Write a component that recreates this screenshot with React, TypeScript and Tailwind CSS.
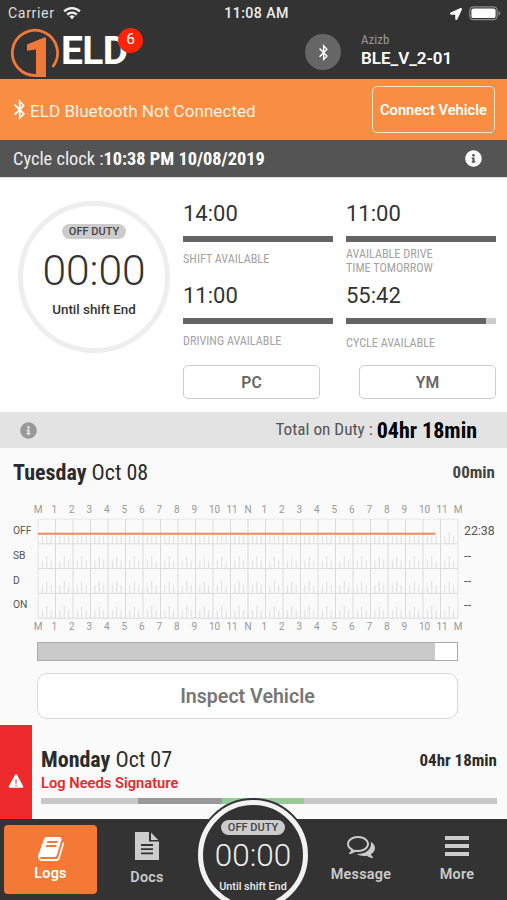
import type { ReactNode } from 'react'
import { FaBluetoothB, FaInfoCircle, FaLocationArrow } from 'react-icons/fa'
import { IoIosWarning } from 'react-icons/io'

const HOURS = ['M', '1', '2', '3', '4', '5', '6', '7', '8', '9', '10', '11', 'N', '1', '2', '3', '4', '5', '6', '7', '8', '9', '10', '11', 'M']

const ROWS = [
  { label: 'OFF', total: '22:38' },
  { label: 'SB', total: '--' },
  { label: 'D', total: '--' },
  { label: 'ON', total: '--' },
]

const COL = 17.5
const ROW = 24.8

function Condensed({ className = '', children }: { className?: string; children: ReactNode }) {
  return (
    <span className={`font-['Roboto_Condensed',Roboto,sans-serif] font-stretch-condensed whitespace-nowrap ${className}`}>
      {children}
    </span>
  )
}

function WifiIcon() {
  return (
    <svg width="18" height="14" viewBox="0 0 18 14" fill="none" stroke="#f2f2f2" strokeWidth="2.4">
      <path d="M1.2 5.4a11 11 0 0 1 15.6 0" />
      <path d="M4.2 8.6a6.8 6.8 0 0 1 9.6 0" />
      <path d="M9 13.2 6.4 10.6a3.7 3.7 0 0 1 5.2 0z" fill="#f2f2f2" stroke="none" />
    </svg>
  )
}

function Battery() {
  return (
    <svg width="32" height="15" viewBox="0 0 32 15">
      <rect x="0.8" y="0.8" width="27.4" height="12.9" rx="3.6" fill="none" stroke="#8c8c8c" strokeWidth="1.2" />
      <rect x="2.4" y="2.4" width="24.2" height="9.7" rx="2.2" fill="#fff" />
      <path d="M29.6 5v4.6q1.6-.6 1.6-2.3T29.6 5" fill="#8c8c8c" />
    </svg>
  )
}

function Logo() {
  return (
    <svg width="50" height="52" viewBox="0 0 50 52">
      <path d="M26 48.4A22.6 22.6 0 1 1 41.6 40" fill="none" stroke="#f0793a" strokeWidth="2.8" />
      <path d="M16 17.6 33.2 10.4H35V50H25V22.6l-9 1.2z" fill="#f0793a" />
    </svg>
  )
}

function BookIcon() {
  return (
    <svg width="26" height="24" viewBox="0 128 1664 1536" fill="#fff">
      <path d="M1639 478q40 57 18 129l-275 906q-19 64-76.5 107.5t-122.5 43.5h-923q-77 0-148.5-53.5t-99.5-131.5q-24-67-2-127 0-4 3-27t4-37q1-8-3-21.5t-3-19.5q2-11 8-21t16.5-23.5 16.5-23.5q23-38 45-91.5t30-91.5q3-10 .5-30t-.5-28q3-11 17-28t17-23q21-36 42-92t25-90q1-9-2.5-32t.5-28q4-13 22-30.5t22-22.5q19-26 42.5-84.5t27.5-96.5q1-8-3-25.5t-2-26.5q2-8 9-18t18-23 17-21q8-12 16.5-30.5t15-35 16-36 19.5-32 26.5-23.5 36-11.5 47.5 5.5l-1 3q38-9 51-9h761q74 0 114 56t18 130l-274 906q-36 119-71.5 153.5t-128.5 34.5h-869q-27 0-38 15-11 16-1 43 24 70 144 70h923q29 0 56-15.5t35-41.5l300-987q7-22 5-57 38 15 59 43zm-1064 2q-4 13 2 22.5t20 9.5h608q13 0 25.5-9.5t16.5-22.5l21-64q4-13-2-22.5t-20-9.5h-608q-13 0-25.5 9.5t-16.5 22.5zm-83 256q-4 13 2 22.5t20 9.5h608q13 0 25.5-9.5t16.5-22.5l21-64q4-13-2-22.5t-20-9.5h-608q-13 0-25.5 9.5t-16.5 22.5z" />
    </svg>
  )
}

function DocIcon() {
  return (
    <svg width="24" height="28" viewBox="0 0 24 28">
      <path d="M0 0h14v9.5h10V28H0z" fill="#ccc" />
      <path d="M16 0.6 23.2 8H16z" fill="#ccc" />
      <path d="M6 13h12M6 17.2h12M6 21.4h12" stroke="#333" strokeWidth="1.8" />
    </svg>
  )
}

function MessageIcon() {
  return (
    <svg width="28" height="28" viewBox="0 0 1792 1792" fill="#ccc">
      <path d="M704 384q-153 0-286 52t-211.5 141-78.5 191q0 82 53 158t149 132l97 56-35 84q34-20 62-39l44-31 53 10q78 14 153 14 153 0 286-52t211.5-141 78.5-191-78.5-191-211.5-141-286-52zm0-128q191 0 353.5 68.5t256.5 186.5 94 257-94 257-256.5 186.5-353.5 68.5q-86 0-176-16-124 88-278 128-36 9-86 16h-3q-11 0-20.5-8t-11.5-21q-1-3-1-6.5t.5-6.5 2-6l2.5-5 3.5-5.5 4-5 4.5-5 4-4.5q5-6 23-25t26-29.5 22.5-29 25-38.5 20.5-44q-124-72-195-177t-71-224q0-139 94-257t256.5-186.5 353.5-68.5zm822 1169q10 24 20.5 44t25 38.5 22.5 29 26 29.5 23 25q1 1 4 4.5t4.5 5 4 5 3.5 5.5l2.5 5 2 6 .5 6.5-1 6.5q-3 14-13 22t-22 7q-50-7-86-16-154-40-278-128-90 16-176 16-271 0-472-132 58 4 88 4 161 0 309-45t264-129q125-92 192-212t67-254q0-77-23-152 129 71 204 178t75 230q0 120-71 224.5t-195 176.5z" />
    </svg>
  )
}

function Header() {
  return (
    <header className="h-[79px] bg-[#333] text-white">
      <div className="grid h-[27px] grid-cols-3 items-center pl-2 pr-1.5 text-[14.2px]">
        <div className="flex items-center gap-2 tracking-[0.6px] text-[#ddd]">
          Carrier <WifiIcon />
        </div>
        <span className="ml-1 text-center font-medium tracking-[0.4px] text-[#eee]">11:08 AM</span>
        <div className="flex items-center justify-end gap-[7px]">
          <FaLocationArrow size={12} />
          <Battery />
        </div>
      </div>
      <div className="flex h-[52px] pl-[11px]">
        <Logo />
        <div className="relative">
          <span className="block text-[39px] font-bold leading-[49px] tracking-[-0.7px]">ELD</span>
          <span className="absolute left-[57px] top-[0.5px] flex size-[25px] items-center justify-center rounded-full bg-[#fb2408] text-[15.5px]">
            6
          </span>
        </div>
        <div className="ml-auto mt-[7px] flex size-[36px] items-center justify-center rounded-full bg-[#666]">
          <FaBluetoothB size={17} />
        </div>
        <div className="ml-5 mt-[5px] w-[146px]">
          <Condensed className="block text-[13px] leading-4 text-[#999]">Azizb</Condensed>
          <span className="block text-[17px] font-semibold leading-5">BLE_V_2-01</span>
        </div>
      </div>
    </header>
  )
}

function Stat({ value, label, fill = 100, labelClass }: { value: string; label: ReactNode; fill?: number; labelClass: string }) {
  return (
    <div className="h-[82px]">
      <div className="text-[22px] leading-[26px] text-[#333]">{value}</div>
      <div className="mt-[9px] h-[6px] bg-[#ccc]">
        <div className="h-full bg-[#646464]" style={{ width: `${fill}%` }} />
      </div>
      <Condensed className={`block text-[12.2px] leading-[14px] text-[#a3a3a3] ${labelClass}`}>{label}</Condensed>
    </div>
  )
}

function Clocks() {
  return (
    <section className="flex h-[234px] bg-white">
      <div className="ml-[18px] mt-[23px] flex size-[152px] flex-col items-center rounded-full border-[5px] border-[#eee]">
        <span className="mt-[18px] h-[15px] w-[64px] rounded-full bg-[#ccc] text-center text-[11px] font-medium leading-[15px] text-[#444]">
          OFF DUTY
        </span>
        <span className="mt-[7px] text-[42.5px] font-light leading-[50px] text-[#333]">00:00</span>
        <span className="mt-[6px] text-[13.4px] font-medium leading-4 text-[#333]">Until shift End</span>
      </div>
      <div className="ml-[13px] mt-[23px] w-[313px]">
        <div className="grid grid-cols-[150px_150px] gap-x-[13px]">
          <Stat value="14:00" label="SHIFT AVAILABLE" labelClass="mt-[10px]" />
          <Stat value="11:00" label={<>AVAILABLE DRIVE<br />TIME TOMORROW</>} labelClass="mt-[5px]" />
          <Stat value="11:00" label="DRIVING AVAILABLE" labelClass="mt-[10px]" />
          <Stat value="55:42" label="CYCLE AVAILABLE" fill={93} labelClass="mt-[12px]" />
        </div>
        <div className="flex justify-between text-[15.7px] font-semibold text-[#666]">
          <button className="h-[34px] w-[137px] rounded-[5px] border border-[#ccc] pt-px">PC</button>
          <button className="h-[34px] w-[137px] rounded-[5px] border border-[#ccc] pt-px">YM</button>
        </div>
      </div>
    </section>
  )
}

function LogGrid() {
  const xs = Array.from({ length: 25 }, (_, i) => 38 + i * COL)
  const labelX = (label: string, x: number) => (label.length === 2 ? x + 1.5 : /\d/.test(label) ? x - 1.2 : x)

  return (
    <svg width="507" height="136" viewBox="0 500 507 136" className="block">
      <g fontSize="10" fill="#999" textAnchor="middle">
        {HOURS.map((h, i) => (
          <text key={`t${i}`} x={labelX(h, xs[i])} y="513">{h}</text>
        ))}
        {HOURS.map((h, i) => (
          <text key={`b${i}`} x={labelX(h, xs[i])} y="630.3">{h}</text>
        ))}
      </g>
      {ROWS.map((row, r) => {
        const bottom = 519 + (r + 1) * ROW
        return (
          <g key={row.label}>
            {xs.slice(0, 24).map((x, c) =>
              [1, 2, 3].map((q) => (
                <path
                  key={`${c}-${q}`}
                  d={`M${x + (q * COL) / 4} ${bottom}v${q === 2 && (r > 0 || c === 23) ? -12 : -8}`}
                  stroke="#dedede"
                />
              )),
            )}
            <path d={`M38 ${bottom}H458`} stroke="#dcdcdc" />
            <text x="13" y={534 + r * ROW} fontSize="10.3" fill="#555">{row.label}</text>
            <text x="464" y={535 + r * ROW} fontSize="12.3" fill="#555">{row.total}</text>
          </g>
        )
      })}
      <path d="M38 519.2H458" stroke="#e8e8e8" />
      {xs.map((x, i) => (
        <path key={x} d={`M${x} 519V618.4`} stroke={i === 0 || i === 24 ? '#e6e6e6' : '#dadada'} />
      ))}
      <path d="M38 533.7H435.5" stroke="#ec8c5e" strokeWidth="2" />
    </svg>
  )
}

function Today() {
  return (
    <section>
      <div className="flex h-[52px] items-center justify-between pb-[3px] pl-[13px] pr-3 text-[#2b2b2b]">
        <Condensed className="text-[22px]"><b>Tuesday</b> Oct 08</Condensed>
        <Condensed className="text-[17px] font-bold text-[#444]">00min</Condensed>
      </div>
      <LogGrid />
      <div className="ml-[37px] mt-[6px] h-[19px] w-[421px] border border-[#aaa] bg-white">
        <div className="h-full w-[397px] bg-[#cacaca]" />
      </div>
      <button className="ml-[37px] mt-3 block h-[46px] w-[421px] rounded-[10px] border border-[#d8d8d8] bg-white pt-px text-[19.6px] font-semibold text-[#777]">
        Inspect Vehicle
      </button>
    </section>
  )
}

function Yesterday() {
  return (
    <section className="mt-[6px] flex h-[94px]">
      <div className="flex w-[32px] items-center justify-center bg-[#ed2a2b] pt-[18px] text-white">
        <IoIosWarning size={18} />
      </div>
      <div className="ml-[9px] mt-[21px] w-[456px]">
        <div className="flex items-center justify-between text-[#2b2b2b]">
          <Condensed className="text-[22px] leading-[28px]"><b>Monday</b> Oct 07</Condensed>
          <Condensed className="text-[17px] font-bold leading-[28px]">04hr 18min</Condensed>
        </div>
        <div className="text-[14.7px] font-semibold leading-[18px] text-[#e8292b]">Log Needs Signature</div>
        <div className="mt-[6px] flex h-[6px] bg-[#c8c8c8]">
          <div className="ml-[97px] w-[84px] bg-[#999]" />
          <div className="w-[82px] bg-[#96cb98]" />
        </div>
      </div>
    </section>
  )
}

function NavBar() {
  return (
    <nav className="relative flex h-[81px] bg-[#333] text-[14.4px] font-semibold leading-[18px] tracking-[0.25px] text-[#ccc]">
      <div className="ml-[4px] mt-[6px] flex h-[69px] w-[93px] flex-col items-center rounded-[4px] bg-[#f57936] pt-[12px] text-white">
        <BookIcon />
        <span className="mt-[4px]">Logs</span>
      </div>
      <div className="flex w-[100px] flex-col items-center pt-[13px]">
        <DocIcon />
        <span className="mt-[9px]">Docs</span>
      </div>
      <div className="absolute left-[196px] top-[-21px] flex size-[114px] flex-col items-center rounded-full border-2 border-[#333] bg-[#333]">
        <div className="flex size-[110px] shrink-0 flex-col items-center rounded-full border-[5px] border-[#f2f2f2] font-medium tracking-normal">
          <span className="mt-[15px] h-[15px] w-[64px] rounded-full bg-[#ccc] text-center text-[11px] leading-[15px] text-[#444]">
            OFF DUTY
          </span>
          <span className="mt-[2px] text-[31.5px] font-light leading-[38px] text-[#eee]">00:00</span>
          <span className="mt-[4px] whitespace-nowrap text-[10.8px] leading-4 text-[#eee]">Until shift End</span>
        </div>
      </div>
      <div className="ml-[112px] flex w-[104px] flex-col items-center pt-[13px]">
        <MessageIcon />
        <span className="mt-[6px]">Message</span>
      </div>
      <div className="flex w-[88px] flex-col items-center pt-[17px]">
        <div className="flex flex-col gap-1">
          <div className="h-[4px] w-6 bg-[#ccc]" />
          <div className="h-[4px] w-6 bg-[#ccc]" />
          <div className="h-[4px] w-6 bg-[#ccc]" />
        </div>
        <span className="mt-[10px]">More</span>
      </div>
    </nav>
  )
}

export default function App() {
  return (
    <div className="h-[900px] w-[507px] overflow-hidden bg-[#fafafa] font-['Roboto',sans-serif]">
      <Header />
      <div className="flex h-[61px] items-center bg-[#f98d42] pl-[13px] pr-3 text-white">
        <FaBluetoothB size={21} className="-ml-1" />
        <span className="mt-[5px] text-[17.1px] text-[#fff1e3]">ELD Bluetooth Not Connected</span>
        <button className="ml-auto h-[47px] w-[123px] rounded-[5px] border-[1.5px] border-[#ffe3cb] pt-px text-[14.7px] font-semibold">
          Connect Vehicle
        </button>
      </div>
      <div className="flex h-[38px] items-center justify-between border-b border-[#ddd] bg-[#545454] pl-[13px] pr-[25px] text-white">
        <Condensed className="text-[18.35px] text-[#eee]">Cycle clock :<b className="text-white">10:38 PM 10/08/2019</b></Condensed>
        <FaInfoCircle size={17} />
      </div>
      <Clocks />
      <div className="flex h-[36px] items-center bg-[#e3e3e3] pl-[20px] pr-[30px]">
        <FaInfoCircle size={17} className="text-[#999]" />
        <Condensed className="ml-auto text-[17.2px] text-[#555]">Total on Duty :</Condensed>
        <Condensed className="ml-1 text-[22px] font-bold text-black">04hr 18min</Condensed>
      </div>
      <Today />
      <Yesterday />
      <NavBar />
    </div>
  )
}
